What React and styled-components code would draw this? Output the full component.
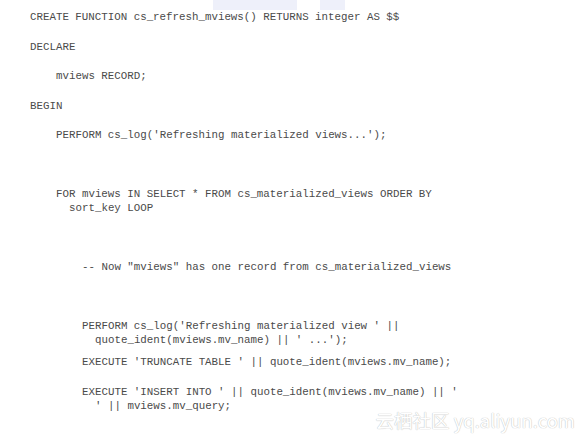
import React from "react";
import styled, { createGlobalStyle } from "styled-components";

const Global = createGlobalStyle`
  html, body { margin: 0; padding: 0; background: #ffffff; }
  body { width: 588px; height: 439px; overflow: hidden; }
`;

const Page = styled.div`
  position: relative;
  width: 588px;
  height: 439px;
  background: #ffffff;
  padding: 10px 0 0 30px;
  box-sizing: border-box;
  font-family: "Liberation Mono", "Courier New", monospace;
  font-size: 10.8px;
  line-height: 14px;
  color: #4a4a4a;
`;

const Para = styled.p`
  margin: ${(p) => (p.$tight ? "-7.5px" : "0")} 0 15.5px 0;
  padding-left: ${(p) => p.$indent * 26 + 13}px;
  text-indent: -13px;
  white-space: pre;
  min-height: 14px;
`;

const Tab = styled.div`
  position: absolute;
  top: 0;
  left: ${(p) => p.$left}px;
  width: ${(p) => p.$width}px;
  height: 10px;
  background: #eef0fa;
`;

const Watermark = styled.div`
  position: absolute;
  right: 13px;
  bottom: 8px;
  font-family: "Noto Sans CJK SC", "Noto Sans", sans-serif;
  font-size: 18.5px;
  line-height: 22px;
  color: #ffffff;
  text-shadow: 0 0 1px #c4c4c4, 0 0 1px #c4c4c4;
`;

const lines = [
  { i: 0, t: "CREATE FUNCTION cs_refresh_mviews() RETURNS integer AS $$" },
  { i: 0, t: "DECLARE" },
  { i: 1, t: "mviews RECORD;" },
  { i: 0, t: "BEGIN" },
  { i: 1, t: "PERFORM cs_log('Refreshing materialized views...');" },
  { i: 1, t: " " },
  { i: 1, t: ["FOR mviews IN SELECT * FROM cs_materialized_views ORDER BY", "sort_key LOOP"] },
  { i: 2, t: " " },
  { i: 2, t: "-- Now \"mviews\" has one record from cs_materialized_views" },
  { i: 2, t: " " },
  { i: 2, t: ["PERFORM cs_log('Refreshing materialized view ' ||", "quote_ident(mviews.mv_name) || ' ...');"] },
  { i: 2, t: "EXECUTE 'TRUNCATE TABLE ' || quote_ident(mviews.mv_name);", tight: true },
  { i: 2, t: ["EXECUTE 'INSERT INTO ' || quote_ident(mviews.mv_name) || '", "' || mviews.mv_query;"] },
];

export default function App() {
  return (
    <>
      <Global />
      <Page>
        <Tab $left={213} $width={84} />
        <Tab $left={320} $width={25} />
        {lines.map((l, k) => (
          <Para key={k} $indent={l.i} $tight={l.tight}>
            {Array.isArray(l.t) ? (
              <>
                {l.t[0]}
                <br />
                {l.t[1]}
              </>
            ) : (
              l.t
            )}
          </Para>
        ))}
        <Watermark>云栖社区 yq.aliyun.com</Watermark>
      </Page>
    </>
  );
}
